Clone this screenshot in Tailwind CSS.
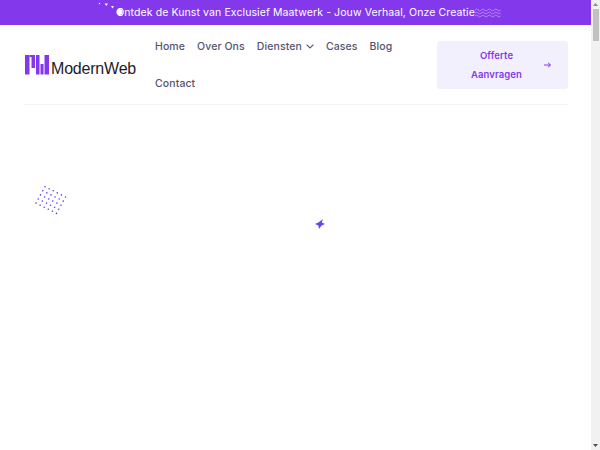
<!DOCTYPE html>
<html lang="en">
<head>
    <meta charset="UTF-8">
    <meta name="viewport" content="width=device-width, initial-scale=1.0">
    <title>ModernWeb</title>
    <script src="https://cdn.jsdelivr.net/npm/@tailwindcss/browser@4"></script>
</head>
<body class="bg-white font-['Inter',sans-serif]">
    <div class="flex h-[450px] overflow-hidden">
        <div class="flex-1 min-w-0">
            <!-- top banner -->
            <div class="relative h-[25px] bg-[#8338ec] flex items-center justify-center text-white text-[10.5px] leading-[25px]">
                <svg class="absolute left-[98px] top-0" width="30" height="20" viewBox="0 0 30 20">
                    <circle cx="1.5" cy="3.5" r="0.7" fill="#fff"/>
                    <path d="M6.5 3.5l3.5 0-1.7 2.5z" fill="#fff"/>
                    <path d="M13 6l3 0-1.5 2.4z" fill="#fff"/>
                    <circle cx="21.5" cy="12" r="3" fill="#fff"/>
                </svg>
                <p class="tracking-[0.1px]">Ontdek de Kunst van Exclusief Maatwerk - Jouw Verhaal, Onze Creatie</p>
                <svg class="absolute left-[475px] top-[8px]" width="26" height="10" viewBox="0 0 26 10" fill="none" stroke="#c9a8f7" stroke-width="0.7">
                    <path d="M0 2q1.6-2 3.2 0t3.2 0 3.2 0 3.2 0 3.2 0 3.2 0 3.2 0 3.2 0"/>
                    <path d="M0 5q1.6-2 3.2 0t3.2 0 3.2 0 3.2 0 3.2 0 3.2 0 3.2 0 3.2 0"/>
                    <path d="M0 8q1.6-2 3.2 0t3.2 0 3.2 0 3.2 0 3.2 0 3.2 0 3.2 0 3.2 0"/>
                </svg>
            </div>

            <!-- header -->
            <header class="ml-6 mr-[23px] h-[80px] border-b border-[#f3f1fa] flex items-center">
                <a class="flex items-end w-[131px] shrink-0">
                    <svg width="26" height="20" viewBox="0 0 26 20" fill="#8338ec" class="shrink-0 ml-[1px]">
                        <rect x="0" y="0" width="4.5" height="19.5"/>
                        <rect x="4.5" y="0" width="2.5" height="2"/>
                        <rect x="6.5" y="0" width="3.5" height="13"/>
                        <rect x="11" y="0" width="3.5" height="19.5"/>
                        <rect x="15.5" y="9" width="3" height="10.5"/>
                        <rect x="19.5" y="0" width="4.5" height="19.5"/>
                    </svg>
                    <span class="font-['Liberation_Sans',sans-serif] text-[16px] text-[#1c1c28] tracking-[-0.2px] leading-[13px]">ModernWeb</span>
                </a>
                <nav class="w-[282px] shrink-0 mt-[1px] flex flex-wrap text-[#565474] text-[10.5px] font-medium leading-[37px] gap-x-[12px] tracking-[0.1px]">
                    <a>Home</a>
                    <a>Over Ons</a>
                    <a class="flex items-center gap-[4px]">Diensten
                        <svg width="8" height="5" viewBox="0 0 8 5" fill="none" stroke="#565474" stroke-width="1.1"><path d="M.6.6L4 4 7.4.6"/></svg>
                    </a>
                    <a>Cases</a>
                    <a>Blog</a>
                    <a>Contact</a>
                </nav>
                <a class="ml-auto w-[131px] h-[48px] bg-[#f3f0fe] rounded-[3px] flex items-center text-[#8338ec] text-[9.5px] font-semibold leading-[19px] tracking-[0.1px]">
                    <span class="w-[107px] pl-[12px] text-center">Offerte<br>Aanvragen</span>
                    <svg width="7" height="6" viewBox="0 0 7 6" fill="none" stroke="#8338ec" stroke-width="1"><path d="M0 3h6.5M4 .7L6.5 3 4 5.3"/></svg>
                </a>
            </header>

            <!-- floating decoration -->
            <div class="relative">
                <svg class="absolute left-[34px] top-[78px]" width="36" height="34" viewBox="0 0 36 34" fill="#5a3ff0">
                    <circle cx="11" cy="3.7" r=".8"/><circle cx="15.1" cy="5.8" r=".8"/><circle cx="19.2" cy="7.8" r=".8"/><circle cx="23.3" cy="9.9" r=".8"/><circle cx="27.4" cy="11.9" r=".8"/><circle cx="31.5" cy="14" r=".8"/>
                    <circle cx="8.75" cy="7.8" r=".8"/><circle cx="12.85" cy="9.9" r=".8"/><circle cx="16.95" cy="11.9" r=".8"/><circle cx="21.05" cy="14" r=".8"/><circle cx="25.15" cy="16" r=".8"/><circle cx="29.25" cy="18.1" r=".8"/>
                    <circle cx="6.5" cy="11.9" r=".8"/><circle cx="10.6" cy="14" r=".8"/><circle cx="14.7" cy="16" r=".8"/><circle cx="18.8" cy="18.1" r=".8"/><circle cx="22.9" cy="20.1" r=".8"/><circle cx="27" cy="22.2" r=".8"/>
                    <circle cx="4.25" cy="16" r=".8"/><circle cx="8.35" cy="18.1" r=".8"/><circle cx="12.45" cy="20.1" r=".8"/><circle cx="16.55" cy="22.2" r=".8"/><circle cx="20.65" cy="24.2" r=".8"/><circle cx="24.75" cy="26.3" r=".8"/>
                    <circle cx="2" cy="20.1" r=".8"/><circle cx="6.1" cy="22.2" r=".8"/><circle cx="10.2" cy="24.2" r=".8"/><circle cx="14.3" cy="26.3" r=".8"/><circle cx="18.4" cy="28.3" r=".8"/><circle cx="22.5" cy="30.4" r=".8"/>
                </svg>
                <svg class="absolute left-[315px] top-[114px]" width="10" height="10" viewBox="0 0 9 9" fill="#6047f0">
                    <path d="M7.2 0L6.1 3.1 9 4.4 5.9 5.9 3.6 9 3 5.8 0 4.4 3.4 3z"/>
                </svg>
            </div>
        </div>

        <!-- scrollbar -->
        <aside class="w-[9px] shrink-0 bg-[#f1f1f1] flex flex-col items-center">
            <svg class="mt-[3px] mb-[3px]" width="5" height="3" viewBox="0 0 5 3" fill="#8a8a8a"><path d="M2.5 0L5 3H0z"/></svg>
            <div class="w-[6px] h-[32px] bg-[#c1c1c1]"></div>
            <svg class="mt-auto mb-[3px]" width="5" height="3" viewBox="0 0 5 3" fill="#505050"><path d="M0 0h5L2.5 3z"/></svg>
        </aside>
    </div>
</body>
</html>
